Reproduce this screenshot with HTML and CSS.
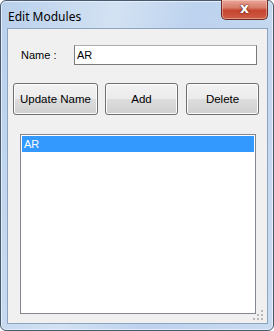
FILE: index.html
```html
<!DOCTYPE html>
<html lang="en">
<head>
<meta charset="UTF-8">
<title>Edit Modules</title>
<link rel="stylesheet" href="styles.css">
</head>
<body>
<div class="window">
    <div class="titlebar">
        <span class="title">Edit Modules</span>
        <button class="close">x</button>
    </div>
    <div class="client">
        <div class="name-row">
            <label class="label" for="name">Name :</label>
            <input class="textbox" id="name" type="text" value="AR">
        </div>
        <div class="buttons">
            <button class="button update">Update Name</button>
            <button class="button add">Add</button>
            <button class="button delete">Delete</button>
        </div>
        <div class="list">
            <div class="item selected">AR</div>
        </div>
        <svg class="grip" width="12" height="12" viewBox="0 0 12 12">
            <rect x="9" y="1" width="2" height="2" fill="#b8b8b8"/>
            <rect x="9" y="5" width="2" height="2" fill="#b8b8b8"/>
            <rect x="5" y="5" width="2" height="2" fill="#b8b8b8"/>
            <rect x="9" y="9" width="2" height="2" fill="#b8b8b8"/>
            <rect x="5" y="9" width="2" height="2" fill="#b8b8b8"/>
            <rect x="1" y="9" width="2" height="2" fill="#b8b8b8"/>
        </svg>
    </div>
</div>
</body>
</html>
```

FILE: styles.css
```css
body {
    margin: 0;
    font-family: "Liberation Sans", Arial, sans-serif;
    background-color: #ffffff;
}

.window {
    width: 274px;
    height: 331px;
    box-sizing: border-box;
    border: 1px solid #4a5a6e;
    border-radius: 6px;
    padding: 0 5px 6px 6px;
    background: linear-gradient(100deg, #b9d0ec 0%, #d3e2f3 35%, #bcd2ee 60%, #c9dbf0 100%);
    box-shadow: inset 0 0 0 1px #e4eefa;
    display: flex;
    flex-direction: column;
}

.titlebar {
    height: 27px;
    display: flex;
    align-items: flex-start;
    justify-content: space-between;
}

.title {
    font-family: "Noto Sans", sans-serif;
    font-size: 12px;
    color: #000000;
    margin-top: 7px;
    margin-left: 1px;
}

.close {
    width: 47px;
    height: 20px;
    margin-top: -1px;
    padding: 0 0 3px 0;
    border: 1px solid #6b2b23;
    border-top: none;
    border-radius: 0 0 5px 5px;
    background: linear-gradient(#e9a699 0%, #d87c6a 40%, #c54530 55%, #cf5c45 100%);
    box-shadow: inset 0 0 0 1px rgba(255, 220, 210, 0.45);
    color: #ffffff;
    font-family: "DejaVu Sans", sans-serif;
    font-size: 14px;
    font-weight: bold;
    line-height: 16px;
    text-shadow: 0 0 2px #5a1a10, 0 0 1px #5a1a10;
}

.client {
    flex: 1;
    position: relative;
    background-color: #f0f0f0;
    border: 1px solid #8ea3bf;
    padding: 0 0 0 12px;
    display: flex;
    flex-direction: column;
}

.name-row {
    display: flex;
    align-items: center;
    height: 20px;
    margin-top: 16px;
}

.label {
    width: 53px;
    font-size: 11px;
    color: #000000;
    padding-left: 1px;
}

.textbox {
    width: 183px;
    height: 20px;
    box-sizing: border-box;
    border: 1px solid #7a7a7a;
    border-top-color: #abadb3;
    padding: 0 2px;
    font-family: "Liberation Sans", Arial, sans-serif;
    font-size: 11px;
    color: #000000;
    background-color: #ffffff;
    outline: none;
}

.buttons {
    display: flex;
    margin-top: 18px;
    margin-left: -7px;
    height: 32px;
}

.button {
    height: 32px;
    border: 1px solid #707070;
    border-radius: 3px;
    background: linear-gradient(#f2f2f2 0%, #ebebeb 50%, #dddddd 51%, #cfcfcf 100%);
    box-shadow: inset 0 0 0 1px #fcfcfc;
    font-family: "Liberation Sans", Arial, sans-serif;
    font-size: 11.5px;
    color: #000000;
    padding: 0;
}

.update {
    width: 85px;
}

.add {
    width: 73px;
    margin-left: 7px;
}

.delete {
    width: 73px;
    margin-left: 8px;
}

.list {
    margin-top: 19px;
    width: 236px;
    height: 180px;
    box-sizing: border-box;
    border: 1px solid #828790;
    background-color: #ffffff;
    padding: 1px;
}

.item {
    height: 16px;
    line-height: 16px;
    padding-left: 2px;
    font-size: 11px;
}

.selected {
    background-color: #3399ff;
    color: #ffffff;
}

.grip {
    position: absolute;
    right: 3px;
    bottom: 2px;
}
```
